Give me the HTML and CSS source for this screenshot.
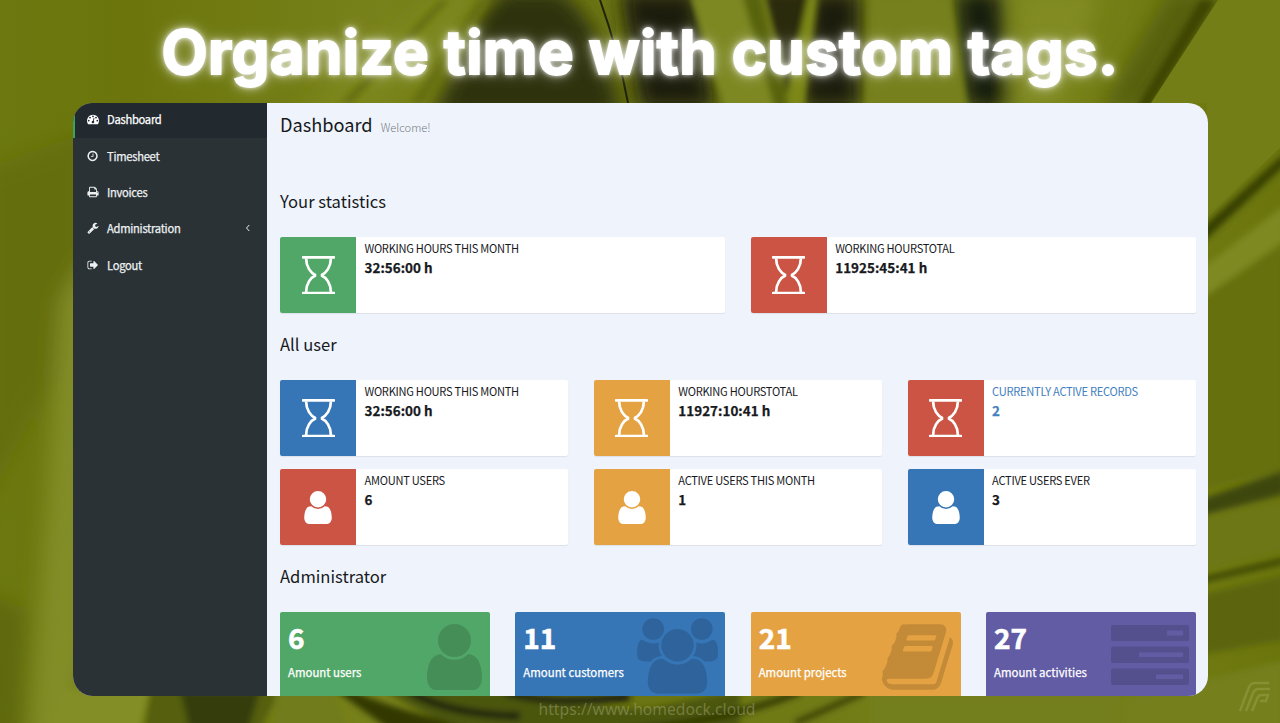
FILE: index.html
```html
<!DOCTYPE html>
<html lang="en">
<head>
<meta charset="utf-8">
<title>Organize time with custom tags.</title>
<link rel="stylesheet" href="styles.css">
</head>
<body>
<svg class="backdrop" viewBox="0 0 1280 723" preserveAspectRatio="none" aria-hidden="true">
  <defs>
    <linearGradient id="cloth" x1="0" x2="1" y1="0" y2="0">
      <stop offset="0" stop-color="#6c7910"/><stop offset=".1" stop-color="#6b750b"/><stop offset=".3" stop-color="#78821b"/>
      <stop offset=".5" stop-color="#6b7512"/><stop offset=".8" stop-color="#78831b"/><stop offset="1" stop-color="#6b750c"/>
    </linearGradient>
    <filter id="b3" x="-50%" y="-50%" width="200%" height="200%"><feGaussianBlur stdDeviation="3"/></filter>
    <filter id="b8" x="-50%" y="-50%" width="200%" height="200%"><feGaussianBlur stdDeviation="10"/></filter>
  </defs>
  <rect width="1280" height="723" fill="url(#cloth)"/>
  <!-- left edge -->
  <g filter="url(#b8)">
    <path d="M-20 170L90 130V330L30 420L-20 520Z" fill="#656e07"/>
    <path d="M60 300L90 250V640L70 740H30Z" fill="#828d27"/>
    <path d="M-20 590L25 610L20 740H-20Z" fill="#5f690c"/>
  </g>
  <!-- top folds -->
  <g filter="url(#b8)">
    <path d="M490 -10H560Q610 30 620 120H430Q460 60 490 -10Z" fill="#2d3007"/>
    <path d="M620 -10H695L715 110H640Z" fill="#1b1c08"/>
    <path d="M810 -10H860V110H800Q800 60 810 -10Z" fill="#1a1b08"/>
    <path d="M955 -10H1000L1010 110H965Z" fill="#191a08"/>
    <path d="M1170 -10H1225L1150 110H1100Z" fill="#566007"/>
    <path d="M300 110L440 -10H500L370 110Z" fill="#7c871e"/>
    <path d="M1020 -10H1100L1060 110H1010Z" fill="#818b21"/>
  </g>
  <g filter="url(#b3)">
    <path d="M340 103L440 0H450L352 103Z" fill="#66700f"/>
    <path d="M410 103L480 0H490L424 103Z" fill="#66700e"/>
    <path d="M690 -5H760L800 110H725Z" fill="#7d8822"/>
    <path d="M766 -5H808L796 110H790Z" fill="#292b07"/>
    <path d="M808 -5H818L804 110H784Z" fill="#7c8719"/>
    <path d="M870 -5H950L968 110H865Z" fill="#76801d"/>
    <path d="M742 -5L775 110H790L760 -5Z" fill="#596309"/>
    <path d="M1216 0L1148 110H1135L1200 0Z" fill="#3c4404"/>
  </g>
  <path d="M1218 0H1280V148L1207 218V103H1151Z" fill="#747e17"/>
  <path d="M600 0Q618 50 628 103" stroke="#202308" stroke-width="2" fill="none"/>
  <!-- right edge -->
  <g filter="url(#b3)">
    <path d="M1200 230L1285 153V165L1200 245Z" fill="#353d05"/>
    <path d="M1200 270L1285 205V240L1200 300Z" fill="#7e8920"/>
    <path d="M1200 300L1285 245V470L1200 490Z" fill="#666f09"/>
    <path d="M1200 500L1285 470V494L1200 516Z" fill="#3d460a"/>
    <path d="M1200 520L1285 500V550L1200 570Z" fill="#6d7717"/>
    <path d="M1200 578L1285 558V563L1200 583Z" fill="#313a06"/>
    <path d="M1200 595L1285 575V640L1200 655Z" fill="#5b650f"/>
    <path d="M1120 700L1285 660V730H1120Z" fill="#757f1a"/>
  </g>
  <!-- bottom folds -->
  <g filter="url(#b3)">
    <path d="M60 690H150L140 730H50Z" fill="#838e25"/>
    <path d="M150 690H280L260 730H145Z" fill="#555f0c"/>
    <path d="M180 690H260L248 730H190Z" fill="#343c08"/>
    <path d="M275 690H330L350 730H275Z" fill="#717c1c"/>
    <path d="M350 690Q420 720 500 730H390L335 690Z" fill="#303706"/>
    <path d="M385 690H520Q580 710 650 708L740 690V730H470Q420 715 385 690Z" fill="#4b5607"/>
    <path d="M410 692Q450 715 520 716" stroke="#17190a" stroke-width="7" fill="none"/>
    <path d="M505 692Q550 706 630 697" stroke="#141807" stroke-width="7" fill="none"/>
    <path d="M620 730Q720 724 800 692" stroke="#2b3305" stroke-width="6" fill="none"/>
    <path d="M795 723L865 692" stroke="#303904" stroke-width="5" fill="none"/>
    <path d="M870 693H1120V730H870Z" fill="#737e1a"/>
  </g>
</svg>

<h1 class="headline">Organize time with custom tags.</h1>

<svg class="defs" aria-hidden="true">
  <symbol id="hourglass" viewBox="0 0 1536 1792">
    <path d="M32 0H1504Q1536 0 1536 32V96Q1536 128 1504 128H32Q0 128 0 96V32Q0 0 32 0ZM32 1664H1504Q1536 1664 1536 1696V1760Q1536 1792 1504 1792H32Q0 1792 0 1760V1696Q0 1664 32 1664Z"/>
    <path d="M192 120C192 500 400 790 640 896C400 1002 192 1292 192 1672M1344 120C1344 500 1136 790 896 896C1136 1002 1344 1292 1344 1672" fill="none" stroke="currentColor" stroke-width="128" stroke-linejoin="bevel"/>
  </symbol>
  <symbol id="user" viewBox="0 128 1280 1536"><path d="M1280 1399q0 109-62.5 187t-150.5 78h-854q-88 0-150.5-78t-62.5-187q0-85 8.5-160.5t31.5-152 58.5-131 94-89 134.5-34.5q131 128 313 128t313-128q76 0 134.5 34.5t94 89 58.5 131 31.5 152 8.5 160.5zm-256-887q0 159-112.5 271.5t-271.5 112.5-271.5-112.5-112.5-271.5 112.5-271.5 271.5-112.5 271.5 112.5 112.5 271.5z"/></symbol>
</svg>

<div class="window">
  <nav class="sidebar">
    <a class="nav-item active"><svg viewBox="0 0 1792 1792"><path d="M384 1152q0-53-37.5-90.5t-90.5-37.5-90.5 37.5-37.5 90.5 37.5 90.5 90.5 37.5 90.5-37.5 37.5-90.5zm192-448q0-53-37.5-90.5t-90.5-37.5-90.5 37.5-37.5 90.5 37.5 90.5 90.5 37.5 90.5-37.5 37.5-90.5zm428 481l101-382q6-26-7.5-48.5t-38.5-29.5-48 6.5-30 39.5l-101 382q-60 5-107 43.5t-63 98.5q-20 77 20 146t117 89 146-20 89-117q16-60-6-117t-72-91zm660-33q0-53-37.5-90.5t-90.5-37.5-90.5 37.5-37.5 90.5 37.5 90.5 90.5 37.5 90.5-37.5 37.5-90.5zm-640-640q0-53-37.5-90.5t-90.5-37.5-90.5 37.5-37.5 90.5 37.5 90.5 90.5 37.5 90.5-37.5 37.5-90.5zm448 192q0-53-37.5-90.5t-90.5-37.5-90.5 37.5-37.5 90.5 37.5 90.5 90.5 37.5 90.5-37.5 37.5-90.5zm320 448q0 261-141 483-19 29-54 29h-1402q-35 0-54-29-141-221-141-483 0-182 71-348t191-286 286-191 348-71 348 71 286 191 191 286 71 348z"/></svg><span>Dashboard</span></a>
    <a class="nav-item"><svg viewBox="64 0 1792 1792"><path d="M1024 544v448q0 14-9 23t-23 9h-320q-14 0-23-9t-9-23v-64q0-14 9-23t23-9h224v-352q0-14 9-23t23-9h64q14 0 23 9t9 23zm416 352q0-148-73-273t-198-198-273-73-273 73-198 198-73 273 73 273 198 198 273 73 273-73 198-198 73-273zm224 0q0 209-103 385.5t-279.5 279.5-385.5 103-385.5-103-279.5-279.5-103-385.5 103-385.5 279.5-279.5 385.5-103 385.5 103 279.5 279.5 103 385.5z"/></svg><span>Timesheet</span></a>
    <a class="nav-item"><svg viewBox="0 0 1792 1792"><path d="M448 1536h896v-256h-896v256zm0-640h896v-384h-160q-40 0-68-28t-28-68v-160h-640v640zm1152 64q0-26-19-45t-45-19-45 19-19 45 19 45 45 19 45-19 19-45zm128 0v416q0 13-9.5 22.5t-22.5 9.5h-224v160q0 40-28 68t-68 28h-960q-40 0-68-28t-28-68v-160h-224q-13 0-22.5-9.5t-9.5-22.5v-416q0-79 56.5-135.5t135.5-56.5h64v-544q0-40 28-68t68-28h672q40 0 88 20t76 48l152 152q28 28 48 76t20 88v256h64q79 0 135.5 56.5t56.5 135.5z"/></svg><span>Invoices</span></a>
    <a class="nav-item"><svg viewBox="0 0 1792 1792"><path d="M448 1472q0-26-19-45t-45-19-45 19-19 45 19 45 45 19 45-19 19-45zm644-420l-682 682q-37 37-90 37-52 0-91-37l-106-108q-38-36-38-90 0-53 38-91l681-681q39 98 114.5 173.5t173.5 114.5zm634-435q0 39-23 106-47 134-164.5 217.5t-258.5 83.5q-185 0-316.5-131.5t-131.5-316.5 131.5-316.5 316.5-131.5q58 0 121.5 16.5t107.5 46.5q16 11 16 28t-16 28l-293 169v224l193 107q5-3 79-48.5t135.5-81 70.5-35.5q15 0 23.5 10t8.5 25z"/></svg><span>Administration</span><svg class="chevron" viewBox="0 0 6 10"><path d="M4.3 2L1.5 5L4.3 8"/></svg></a>
    <a class="nav-item"><svg viewBox="0 0 1792 1792"><path d="M704 1440q0 4 1 20t.5 26.5-3 23.5-10 19.5-20.5 6.5h-320q-119 0-203.5-84.5t-84.5-203.5v-704q0-119 84.5-203.5t203.5-84.5h320q13 0 22.5 9.5t9.5 22.5q0 4 1 20t.5 26.5-3 23.5-10 19.5-20.5 6.5h-320q-66 0-113 47t-47 113v704q0 66 47 113t113 47h312l11.5 1 11.5 3 8 5.5 7 9 2 13.5zm928-544q0 26-19 45l-544 544q-19 19-45 19t-45-19-19-45v-288h-448q-26 0-45-19t-19-45v-384q0-26 19-45t45-19h448v-288q0-26 19-45t45-19 45 19l544 544q19 19 19 45z"/></svg><span>Logout</span></a>
  </nav>
  <main class="content">
    <header class="page-head"><h2>Dashboard</h2><small>Welcome!</small></header>

    <h3 class="first">Your statistics</h3>
    <section class="cards two">
      <div class="card"><div class="tile green"><svg class="hg"><use href="#hourglass"/></svg></div><div class="info"><span class="label">WORKING HOURS THIS MONTH</span><b>32:56:00 h</b></div></div>
      <div class="card"><div class="tile red"><svg class="hg"><use href="#hourglass"/></svg></div><div class="info"><span class="label">WORKING HOURSTOTAL</span><b>11925:45:41 h</b></div></div>
    </section>

    <h3>All user</h3>
    <section class="cards three">
      <div class="card"><div class="tile blue"><svg class="hg"><use href="#hourglass"/></svg></div><div class="info"><span class="label">WORKING HOURS THIS MONTH</span><b>32:56:00 h</b></div></div>
      <div class="card"><div class="tile orange"><svg class="hg"><use href="#hourglass"/></svg></div><div class="info"><span class="label">WORKING HOURSTOTAL</span><b>11927:10:41 h</b></div></div>
      <div class="card"><div class="tile red"><svg class="hg"><use href="#hourglass"/></svg></div><div class="info link"><span class="label">CURRENTLY ACTIVE RECORDS</span><b>2</b></div></div>
      <div class="card"><div class="tile red"><svg class="us"><use href="#user"/></svg></div><div class="info"><span class="label">AMOUNT USERS</span><b>6</b></div></div>
      <div class="card"><div class="tile orange"><svg class="us"><use href="#user"/></svg></div><div class="info"><span class="label">ACTIVE USERS THIS MONTH</span><b>1</b></div></div>
      <div class="card"><div class="tile blue"><svg class="us"><use href="#user"/></svg></div><div class="info"><span class="label">ACTIVE USERS EVER</span><b>3</b></div></div>
    </section>

    <h3>Administrator</h3>
    <section class="cards four">
      <div class="box green"><div><b>6</b><span>Amount users</span></div><svg class="big-user"><use href="#user"/></svg></div>
      <div class="box blue"><div><b>11</b><span>Amount customers</span></div><svg class="big-users" viewBox="0 0 1920 1792"><path d="M593 896q-162 5-265 128h-134q-82 0-138-40.5t-56-118.5q0-353 124-353 6 0 43.5 21t97.5 42.5 119 21.5q67 0 133-23-5 37-5 66 0 139 81 256zm1071 637q0 120-73 189.5t-194 69.5h-874q-121 0-194-69.5t-73-189.5q0-53 3.5-103.5t14-109 26.5-108.5 43-97.5 62-81 85.5-53.5 111.5-20q10 0 43 21.5t73 48 107 48 135 21.5 135-21.5 107-48 73-48 43-21.5q61 0 111.5 20t85.5 53.5 62 81 43 97.5 26.5 108.5 14 109 3.5 103.5zm-1024-1277q0 106-75 181t-181 75-181-75-75-181 75-181 181-75 181 75 75 181zm704 384q0 159-112.5 271.5t-271.5 112.5-271.5-112.5-112.5-271.5 112.5-271.5 271.5-112.5 271.5 112.5 112.5 271.5zm576 225q0 78-56 118.5t-138 40.5h-134q-103-123-265-128 81-117 81-256 0-29-5-66 66 23 133 23 59 0 119-21.5t97.5-42.5 43.5-21q124 0 124 353zm-128-609q0 106-75 181t-181 75-181-75-75-181 75-181 181-75 181 75 75 181z"/></svg></div>
      <div class="box orange"><div><b>21</b><span>Amount projects</span></div><svg class="big-book" viewBox="0 128 1664 1536"><path d="M1639 478q40 57 18 129l-275 906q-19 64-76.5 107.5t-122.5 43.5h-923q-77 0-148.5-53.5t-99.5-131.5q-24-67-2-127 0-4 3-27t4-37q1-8-3-21.5t-3-19.5q2-11 8-21t16.5-23.5 16.5-23.5q23-38 45-91.5t30-91.5q3-10 .5-30t-.5-28q3-11 17-28t17-23q21-36 42-92t25-90q1-9-2.5-32t.5-28q4-13 22-30.5t22-22.5q19-26 42.5-84.5t27.5-96.5q1-8-3-25.5t-2-26.5q2-8 9-18t18-23 17-21q8-12 16.5-30.5t15-35 16-36 19.5-32 26.5-23.5 36-11.5 47.5 5.5l-1 3q38-9 51-9h761q74 0 114 56t18 130l-274 906q-36 119-71.5 153.5t-128.5 34.5h-869q-27 0-38 15-11 16-1 43 24 70 144 70h923q29 0 56-15.5t35-41.5l300-987q7-22 5-57 38 15 59 43zm-1064 2q-4 13 2 22.5t20 9.5h608q13 0 25.5-9.5t16.5-22.5l21-64q4-13-2-22.5t-20-9.5h-608q-13 0-25.5 9.5t-16.5 22.5zm-83 256q-4 13 2 22.5t20 9.5h608q13 0 25.5-9.5t16.5-22.5l21-64q4-13-2-22.5t-20-9.5h-608q-13 0-25.5 9.5t-16.5 22.5z"/></svg></div>
      <div class="box purple"><div><b>27</b><span>Amount activities</span></div><svg class="big-tasks" viewBox="0 0 78 61"><path fill-rule="evenodd" d="M2 0H76Q78 0 78 2V14Q78 16 76 16H2Q0 16 0 14V2Q0 0 2 0ZM56 5.5V10.500H72V5.5ZM2 21.5H76Q78 21.5 78 23.500V36Q78 38 76 38H2Q0 38 0 36V23.500Q0 21.500 2 21.500ZM28 27.500V32H72V27.500ZM2 43.500H76Q78 43.500 78 45.500V58Q78 60 76 60H2Q0 60 0 58V45.500Q0 43.500 2 43.500ZM45 49.500V54H72V49.500Z"/></svg></div>
    </section>
  </main>
</div>

<footer class="site-url">https://www.homedock.cloud</footer>
<svg class="watermark" viewBox="0 0 34 31" aria-hidden="true"><path d="M2 30L11 6Q13 2 17 2H31M8 30L15 12Q17 8 20 8H32M14 30L19 18Q20 14 24 14H30L28 20H22"/></svg>
</body>
</html>
```
FILE: styles.css
```css
* { box-sizing: border-box; }
body {
  margin: 0;
  width: 1280px;
  height: 723px;
  overflow: hidden;
  position: relative;
  display: flex;
  flex-direction: column;
  font-family: "Noto Sans CJK SC", "Noto Sans", sans-serif;
  color: #17191d;
}
.backdrop { position: absolute; inset: 0; width: 1280px; height: 723px; z-index: -1; }
.defs { position: absolute; width: 0; height: 0; }
svg { fill: currentColor; flex: none; }
h1, h2, h3 { margin: 0; font-weight: 400; }

.headline {
  height: 103px;
  padding-top: 11px;
  text-align: center;
  white-space: nowrap;
  font: 700 60px/83px Inter, sans-serif;
  letter-spacing: .4px;
  color: #fff;
  -webkit-text-stroke: 1.8px #fff;
  text-shadow: 0 0 4px rgba(255,255,255,.9), 0 0 10px rgba(255,255,255,.75), 0 0 18px rgba(255,255,255,.4);
}

.window {
  display: flex;
  flex: none;
  width: 1135px;
  height: 592.5px;
  margin-left: 72.5px;
  border-radius: 20px;
  overflow: hidden;
  background: #eff4fc;
}
.sidebar { width: 194.500px; flex: none; background: #2a3236; color: #eef1f2; }
.nav-item {
  display: flex;
  align-items: center;
  height: 36.4px;
  padding: 0 16px 1px 14.5px;
  font-size: 11.2px;
  line-height: 20px;
  letter-spacing: -.28px;
  -webkit-text-stroke: .25px currentColor;
}
.nav-item svg { width: 12px; height: 12px; margin-right: 8px; }
.nav-item.active { height: 35px; padding: 0 16px 3px 12.5px; border-left: 2px solid #3fa35e; background: #222a30; color: #fff; }
.nav-item .chevron { width: 6px; height: 10px; margin: 0 0 0 auto; fill: none; stroke: currentColor; stroke-width: 1; }

.content { flex: 1; padding: 0 11.500px 0 13px; }
.page-head { display: flex; align-items: baseline; gap: 8px; height: 83px; padding-top: 7px; }
h2 { font-size: 18.2px; line-height: 28px; }
small { font-size: 11.2px; color: #777b82; font-weight: 300; }
h3 { height: 67px; padding-top: 18px; font-size: 16.6px; line-height: 26px; }
h3.first { height: 51px; padding-top: 2px; }

.cards { display: grid; column-gap: 25.4px; row-gap: 13px; }
.two { grid-template-columns: 1fr 1fr; }
.three { grid-template-columns: repeat(3, 1fr); }
.four { grid-template-columns: repeat(4, 1fr); }
.card { display: flex; height: 76px; background: #fff; border-radius: 2px; box-shadow: 0 1px 1px rgba(0,0,0,.08); }
.tile { display: flex; align-items: center; justify-content: center; width: 76px; color: #fff; border-radius: 2px 0 0 2px; }
.green { background: #51a767; }
.red { background: #cb5445; }
.blue { background: #3675b6; }
.orange { background: #e5a242; }
.purple { background: #625ca5; }
.hg { width: 33px; height: 38.5px; }
.us { width: 28px; height: 33px; }
.info { display: flex; flex-direction: column; padding: 3px 0 0 8.5px; white-space: nowrap; }
.label { font-size: 11.1px; line-height: 17px; letter-spacing: -.27px; }
.info b { font-size: 13.4px; line-height: 21px; letter-spacing: .05px; -webkit-text-stroke: .25px currentColor; }
.link { color: #4380bd; }

.box { display: flex; justify-content: space-between; height: 84px; padding: 0 7.5px 0 8px; border-radius: 2px 2px 0 0; color: #fff; }
.box > div { display: flex; flex-direction: column; width: 0; white-space: nowrap; }
.box b { font-size: 28px; line-height: 36px; margin-top: 7px; -webkit-text-stroke: .6px currentColor; }
.box span { font-size: 11.4px; line-height: 18px; margin-top: 8px; -webkit-text-stroke: .25px currentColor; }
.box svg { color: #000; opacity: .14; }
.big-user { width: 55px; height: 66px; margin-top: 12px; }
.big-users { width: 81px; height: 76px; margin-top: 6px; }
.big-book { width: 71px; height: 66px; margin-top: 12px; }
.big-tasks { width: 78px; height: 61px; margin-top: 13px; }

.site-url {
  height: 27.500px;
  padding-left: 14px;
  text-align: center;
  font: 15.7px/27px "Noto Sans", sans-serif;
  color: rgba(170,175,130,.45);
}
.watermark { position: absolute; left: 1238px; top: 681px; width: 34px; height: 31px; fill: none; stroke: rgba(160,172,90,.4); stroke-width: 2.5; }
```
